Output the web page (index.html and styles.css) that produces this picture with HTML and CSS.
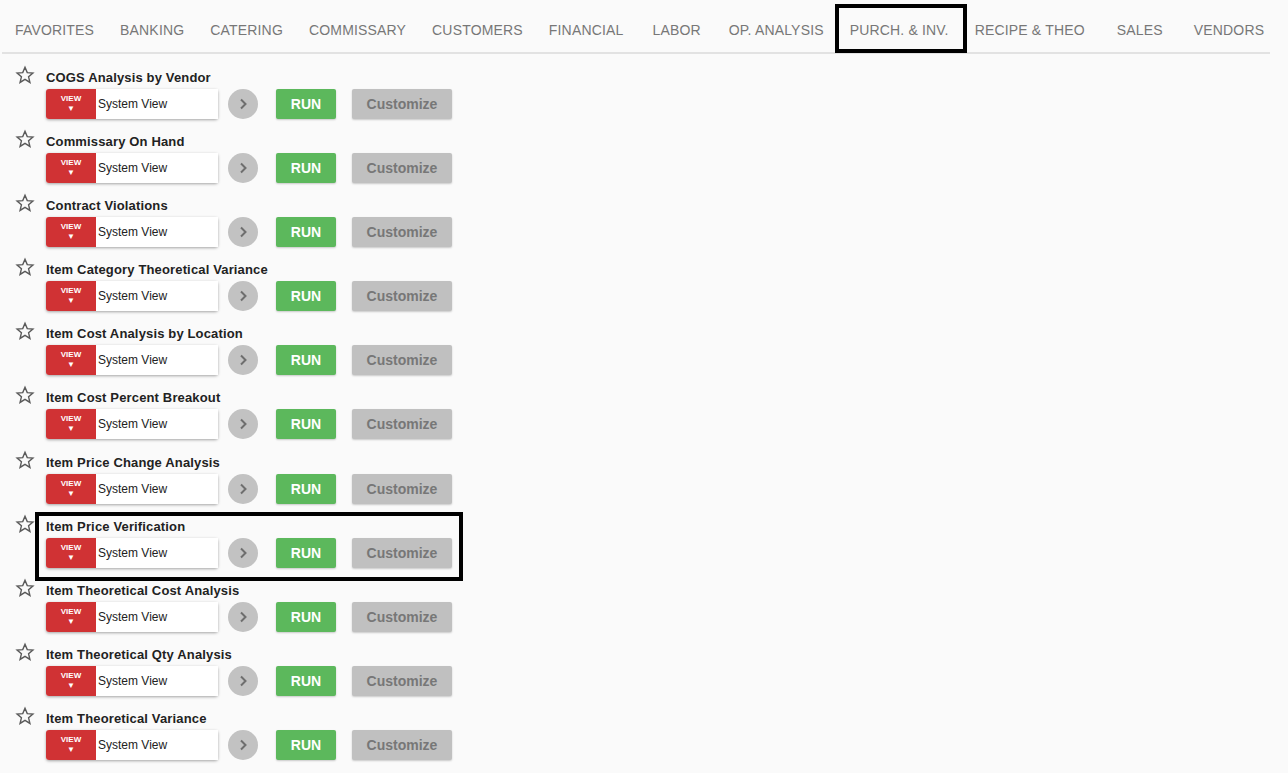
FILE: index.html
```html
<!DOCTYPE html>
<html>
<head>
<meta charset="utf-8">
<link rel="stylesheet" href="styles.css">
</head>
<body>
<nav class="tabs">
  <div class="tab">FAVORITES</div>
  <div class="tab">BANKING</div>
  <div class="tab">CATERING</div>
  <div class="tab">COMMISSARY</div>
  <div class="tab">CUSTOMERS</div>
  <div class="tab">FINANCIAL</div>
  <div class="tab wide">LABOR</div>
  <div class="tab">OP. ANALYSIS</div>
  <div class="tab active">PURCH. &amp; INV.</div>
  <div class="tab">RECIPE &amp; THEO</div>
  <div class="tab sales">SALES</div>
  <div class="tab">VENDORS</div>
</nav>
<main class="list" id="list"></main>
<script src="app.js"></script>
</body>
</html>
```
FILE: app.js
```js
const names = [
  "COGS Analysis by Vendor",
  "Commissary On Hand",
  "Contract Violations",
  "Item Category Theoretical Variance",
  "Item Cost Analysis by Location",
  "Item Cost Percent Breakout",
  "Item Price Change Analysis",
  "Item Price Verification",
  "Item Theoretical Cost Analysis",
  "Item Theoretical Qty Analysis",
  "Item Theoretical Variance"
];
const star = '<svg class="star" width="20" height="20" viewBox="0 0 24 24"><path d="M12 2.8l2.7 6.3 6.8.6-5.2 4.5 1.6 6.7L12 17.3l-5.9 3.6 1.6-6.7-5.2-4.5 6.8-.6z" fill="none" stroke="#5a5a5a" stroke-width="1.7" stroke-linejoin="miter"/></svg>';
const chev = '<svg width="10" height="14" viewBox="0 0 10 14"><path d="M3 2.5l4.5 4.5-4.5 4.5" fill="none" stroke="#6e6e6e" stroke-width="2"/></svg>';
const list = document.getElementById('list');
list.innerHTML = names.map((n, i) => `
  <div class="row${i === 7 ? ' selected' : ''}">
    <div class="star-col">${star}</div>
    <div class="body">
      <div class="title">${n}</div>
      <div class="controls">
        <div class="viewbox">
          <div class="viewbtn"><span class="vlabel">VIEW</span><span class="varrow">&#9660;</span></div>
          <div class="viewfield">System View</div>
        </div>
        <div class="circle">${chev}</div>
        <div class="run">RUN</div>
        <div class="customize">Customize</div>
      </div>
    </div>
  </div>`).join('');
```
FILE: styles.css
```css
html, body {
  margin: 0;
  padding: 0;
  background: #fafafa;
  font-family: "Liberation Sans", Arial, sans-serif;
}
.tabs {
  display: flex;
  margin-left: 2px;
  width: 1268px;
  height: 52px;
  border-bottom: 2px solid #e2e2e2;
  box-sizing: content-box;
}
.tab {
  position: relative;
  padding: 8px 13px 0;
  display: flex;
  align-items: center;
  font-size: 14px;
  letter-spacing: 0.17px;
  color: #777;
  white-space: nowrap;
}
.tab.wide {
  padding: 8px 15px 0 16px;
}
.tab.sales {
  padding: 8px 18px 0 19px;
}
.tab.active::after {
  content: "";
  position: absolute;
  left: -2px;
  top: 4px;
  width: 132px;
  height: 49px;
  border: 4px solid #000;
  box-sizing: border-box;
}
.list {
  padding-top: 12px;
}
.row {
  position: relative;
  display: flex;
  height: 64.1px;
  padding-top: 3px;
  padding-left: 15px;
  box-sizing: border-box;
}
.row.selected::after {
  content: "";
  position: absolute;
  left: 35px;
  top: -3px;
  width: 428px;
  height: 69px;
  border: 4px solid #000;
  box-sizing: border-box;
  pointer-events: none;
}
.star-col {
  width: 31px;
  margin-top: -4px;
}
.star {
  display: block;
}
.title {
  font-size: 13px;
  font-weight: bold;
  letter-spacing: 0.15px;
  color: #222;
  line-height: 16px;
  height: 16px;
  padding-top: 1px;
}
.controls {
  display: flex;
  align-items: center;
  margin-top: 3px;
  height: 30px;
}
.viewbox {
  display: flex;
  width: 172px;
  height: 30px;
  box-shadow: 0 1px 3px rgba(0,0,0,0.35);
  border-radius: 3px;
}
.viewbtn {
  width: 50px;
  background: #d03234;
  border-radius: 3px 0 0 3px;
  display: flex;
  flex-direction: column;
  align-items: center;
  color: #fff;
  font-weight: bold;
}
.vlabel {
  font-size: 8px;
  line-height: 8px;
  margin-top: 6px;
}
.varrow {
  font-size: 8px;
  line-height: 8px;
  margin-top: 2px;
}
.viewfield {
  flex: 1;
  background: #fff;
  font-size: 12px;
  color: #222;
  line-height: 30px;
  padding-left: 2px;
}
.circle {
  width: 30px;
  height: 30px;
  border-radius: 50%;
  background: #c2c2c2;
  margin-left: 10px;
  display: flex;
  align-items: center;
  justify-content: center;
}
.run {
  margin-left: 18px;
  width: 60px;
  height: 30px;
  background: #5cb85c;
  color: #fff;
  font-weight: bold;
  font-size: 14px;
  line-height: 30px;
  text-align: center;
  border-radius: 2px;
  box-shadow: 0 1px 2px rgba(0,0,0,0.2);
}
.customize {
  margin-left: 16px;
  width: 100px;
  height: 30px;
  background: #c0c0c0;
  color: #777;
  font-weight: bold;
  font-size: 14px;
  line-height: 30px;
  text-align: center;
  border-radius: 2px;
  box-shadow: 0 1px 2px rgba(0,0,0,0.2);
}
```
